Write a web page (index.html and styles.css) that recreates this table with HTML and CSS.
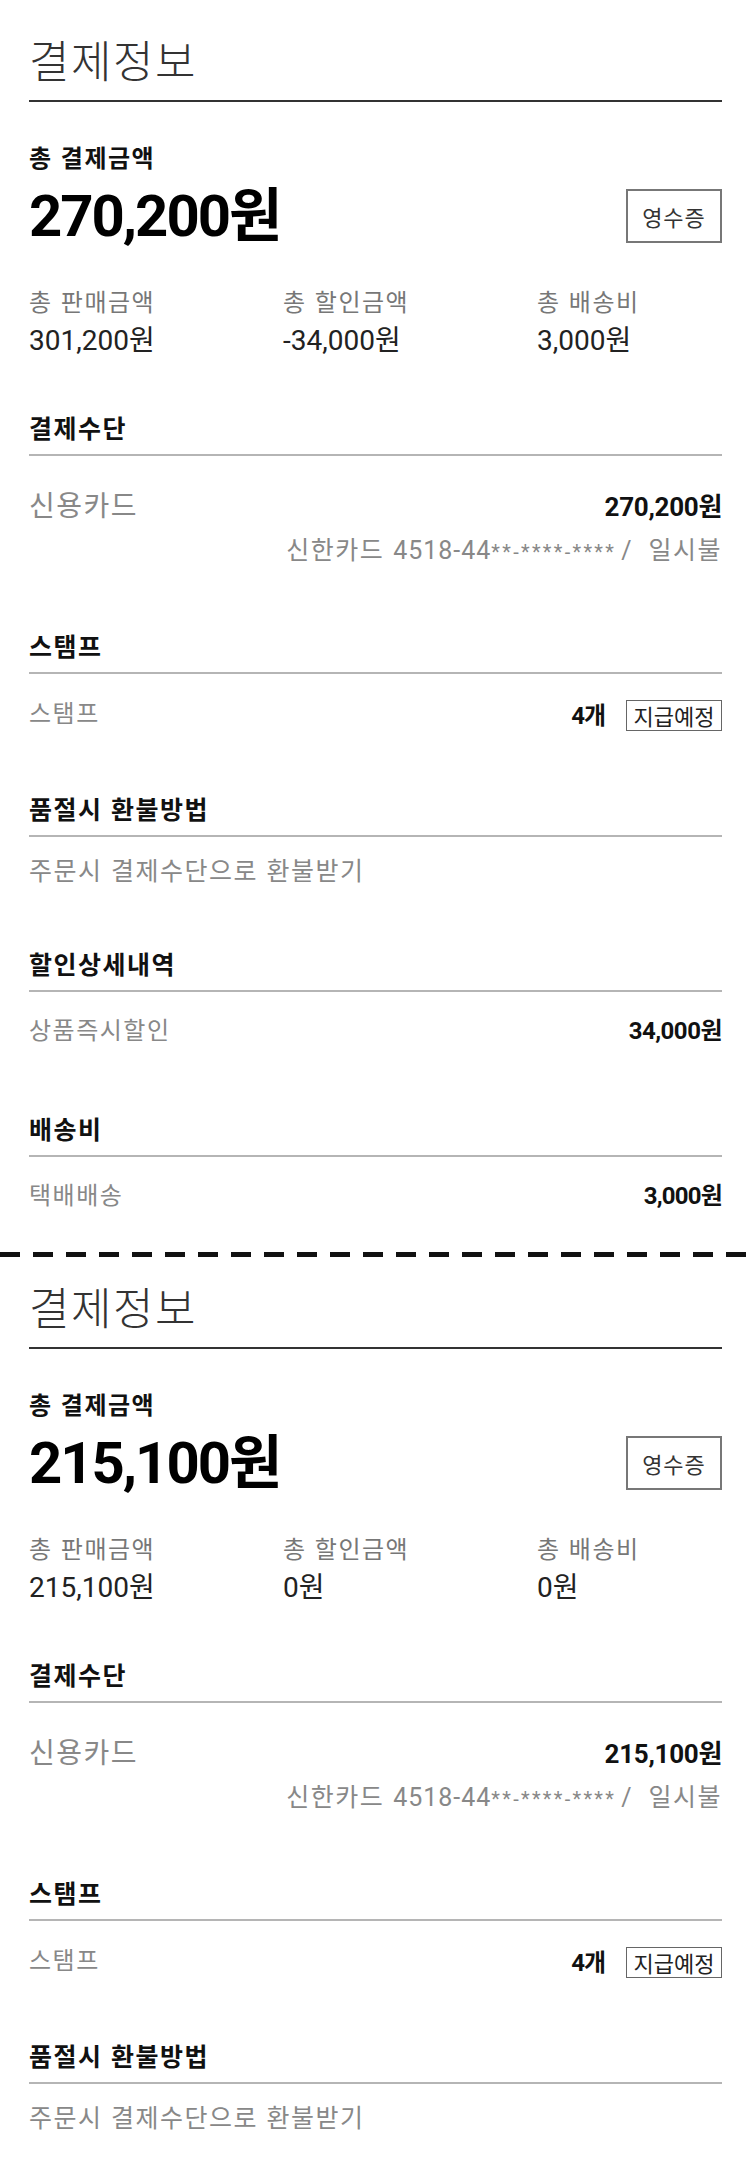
FILE: index.html
```html
<!DOCTYPE html>
<html lang="ko">
<head>
  <meta charset="UTF-8">
  <meta name="viewport" content="width=device-width, initial-scale=1.0">
  <title>결제정보</title>
  <link rel="stylesheet" href="styles.css">
</head>
<body>
  <section class="pay-info">
    <h2 class="pay-title">결제정보</h2>

    <div class="total">
      <p class="total-label">총 결제금액</p>
      <div class="total-row">
        <strong class="total-price num">270,200원</strong>
        <button class="btn-receipt">영수증</button>
      </div>
      <ul class="summary">
        <li><span class="sum-label">총 판매금액</span><span class="sum-value num">301,200원</span></li>
        <li><span class="sum-label">총 할인금액</span><span class="sum-value num">-34,000원</span></li>
        <li><span class="sum-label">총 배송비</span><span class="sum-value num">3,000원</span></li>
      </ul>
    </div>

    <div class="block">
      <h3 class="block-title">결제수단</h3>
      <div class="block-body pay-method">
        <div class="row">
          <span class="method-name">신용카드</span>
          <span class="method-price num">270,200원</span>
        </div>
        <p class="card-detail">
          <span>신한카드</span>
          <span class="card-no num">4518-44<span class="mask">**-****-****</span></span>
          <span class="slash num">/</span>
          <span class="card-plan">일시불</span>
        </p>
      </div>
    </div>

    <div class="block">
      <h3 class="block-title">스탬프</h3>
      <div class="block-body stamp">
        <div class="row">
          <span class="row-label">스탬프</span>
          <span class="stamp-info"><b class="stamp-count num">4개</b><span class="stamp-badge">지급예정</span></span>
        </div>
      </div>
    </div>

    <div class="block block-refund">
      <h3 class="block-title">품절시 환불방법</h3>
      <div class="block-body refund">
        <p class="refund-text">주문시 결제수단으로 환불받기</p>
      </div>
    </div>

    <div class="block">
      <h3 class="block-title">할인상세내역</h3>
      <div class="block-body">
        <div class="row">
          <span class="row-label">상품즉시할인</span>
          <span class="row-value num">34,000원</span>
        </div>
      </div>
    </div>

    <div class="block block-delivery">
      <h3 class="block-title">배송비</h3>
      <div class="block-body">
        <div class="row">
          <span class="row-label">택배배송</span>
          <span class="row-value row-value-sm num">3,000원</span>
        </div>
      </div>
    </div>
  </section>

  <div class="cut-line"></div>

  <section class="pay-info">
    <h2 class="pay-title">결제정보</h2>

    <div class="total">
      <p class="total-label">총 결제금액</p>
      <div class="total-row">
        <strong class="total-price num">215,100원</strong>
        <button class="btn-receipt">영수증</button>
      </div>
      <ul class="summary">
        <li><span class="sum-label">총 판매금액</span><span class="sum-value num">215,100원</span></li>
        <li><span class="sum-label">총 할인금액</span><span class="sum-value num">0원</span></li>
        <li><span class="sum-label">총 배송비</span><span class="sum-value num">0원</span></li>
      </ul>
    </div>

    <div class="block">
      <h3 class="block-title">결제수단</h3>
      <div class="block-body pay-method">
        <div class="row">
          <span class="method-name">신용카드</span>
          <span class="method-price num">215,100원</span>
        </div>
        <p class="card-detail">
          <span>신한카드</span>
          <span class="card-no num">4518-44<span class="mask">**-****-****</span></span>
          <span class="slash num">/</span>
          <span class="card-plan">일시불</span>
        </p>
      </div>
    </div>

    <div class="block">
      <h3 class="block-title">스탬프</h3>
      <div class="block-body stamp">
        <div class="row">
          <span class="row-label">스탬프</span>
          <span class="stamp-info"><b class="stamp-count num">4개</b><span class="stamp-badge">지급예정</span></span>
        </div>
      </div>
    </div>

    <div class="block block-refund">
      <h3 class="block-title">품절시 환불방법</h3>
      <div class="block-body refund">
        <p class="refund-text">주문시 결제수단으로 환불받기</p>
      </div>
    </div>
  </section>
</body>
</html>
```

FILE: styles.css
```css
body {
  margin: 0;
  padding: 0;
  background: #fff;
  color: #222;
  font-family: "Noto Sans CJK KR", sans-serif;
}

p,
h2,
h3,
ul {
  margin: 0;
  padding: 0;
}

ul {
  list-style: none;
}

.num {
  font-family: Roboto, "Noto Sans CJK KR", sans-serif;
  letter-spacing: 0;
}

.pay-info {
  padding: 37px 28px 40px 29px;
}

.pay-title {
  font-size: 44px;
  line-height: 44px;
  font-weight: 300;
  color: #333;
  letter-spacing: 1.5px;
  padding-bottom: 19px;
  border-bottom: 2px solid #333;
}

.total-label {
  margin-top: 43px;
  font-size: 24px;
  line-height: 24px;
  font-weight: bold;
  color: #111;
  letter-spacing: 1.5px;
}

.total-row {
  display: flex;
  justify-content: space-between;
  align-items: center;
  margin-top: 18px;
}

.total-price {
  font-size: 58px;
  line-height: 58px;
  font-weight: bold;
  color: #000;
  letter-spacing: -2px;
}

.btn-receipt {
  width: 96px;
  height: 54px;
  padding: 0;
  background: #fff;
  border: 2px solid #777;
  font-family: "Noto Sans CJK KR", sans-serif;
  font-size: 22px;
  letter-spacing: 1px;
  color: #333;
}

.summary {
  display: grid;
  grid-template-columns: 254px 254px 1fr;
  margin-top: 44px;
}

.summary li {
  display: flex;
  flex-direction: column;
  gap: 14px;
}

.sum-label {
  font-size: 24px;
  line-height: 24px;
  color: #777;
  letter-spacing: 1.5px;
}

.sum-value {
  font-size: 28px;
  line-height: 28px;
  color: #222;
}

.block {
  margin-top: 69px;
}

.total + .block {
  margin-top: 60px;
}

.block-refund {
  margin-top: 65px;
}

.block-delivery {
  margin-top: 73px;
}

.block-title {
  padding-bottom: 14px;
  border-bottom: 2px solid #b5b5b5;
  font-size: 25px;
  line-height: 25px;
  font-weight: bold;
  color: #111;
  letter-spacing: 1.5px;
}

.block-body {
  padding-top: 25px;
}

.row {
  display: flex;
  justify-content: space-between;
  align-items: baseline;
}

.row-label {
  font-size: 24px;
  line-height: 24px;
  color: #888;
  letter-spacing: 1.5px;
}

.row-value {
  font-size: 24px;
  line-height: 24px;
  font-weight: bold;
  color: #111;
  letter-spacing: -0.5px;
}

.row-value-sm {
  letter-spacing: -0.8px;
}

.pay-method {
  padding-top: 34px;
}

.method-name {
  font-size: 28px;
  line-height: 28px;
  color: #888;
  letter-spacing: 1.5px;
}

.method-price {
  font-size: 26px;
  line-height: 28px;
  font-weight: bold;
  color: #111;
  letter-spacing: -0.3px;
}

.card-detail {
  display: flex;
  justify-content: flex-end;
  align-items: baseline;
  margin-top: 15px;
  font-size: 25px;
  line-height: 24px;
  color: #888;
  letter-spacing: 1.5px;
}

.card-no {
  margin-left: 9px;
  font-size: 25px;
  letter-spacing: 1px;
}

.card-no .mask {
  font-size: 20px;
  letter-spacing: 2.3px;
}

.slash {
  margin-left: 5px;
  font-size: 25px;
}

.card-plan {
  margin-left: 17px;
}

.stamp {
  padding-top: 26px;
}

.stamp .row {
  align-items: flex-start;
}

.stamp-info {
  display: flex;
  align-items: center;
  gap: 21px;
}

.stamp-count {
  font-size: 24px;
  line-height: 24px;
  font-weight: bold;
  color: #111;
  letter-spacing: -1px;
}

.stamp-badge {
  width: 94px;
  height: 29px;
  border: 1px solid #666;
  font-size: 22px;
  line-height: 29px;
  text-align: center;
  color: #222;
}

.refund {
  padding-top: 20px;
}

.refund-text {
  font-size: 25px;
  line-height: 25px;
  color: #888;
  letter-spacing: 1.5px;
}

.cut-line {
  height: 5px;
  margin: 4px 0 27px;
  background: repeating-linear-gradient(to right, #111 0 20px, transparent 20px 33px);
}

.cut-line + .pay-info {
  padding-top: 0;
}
```
